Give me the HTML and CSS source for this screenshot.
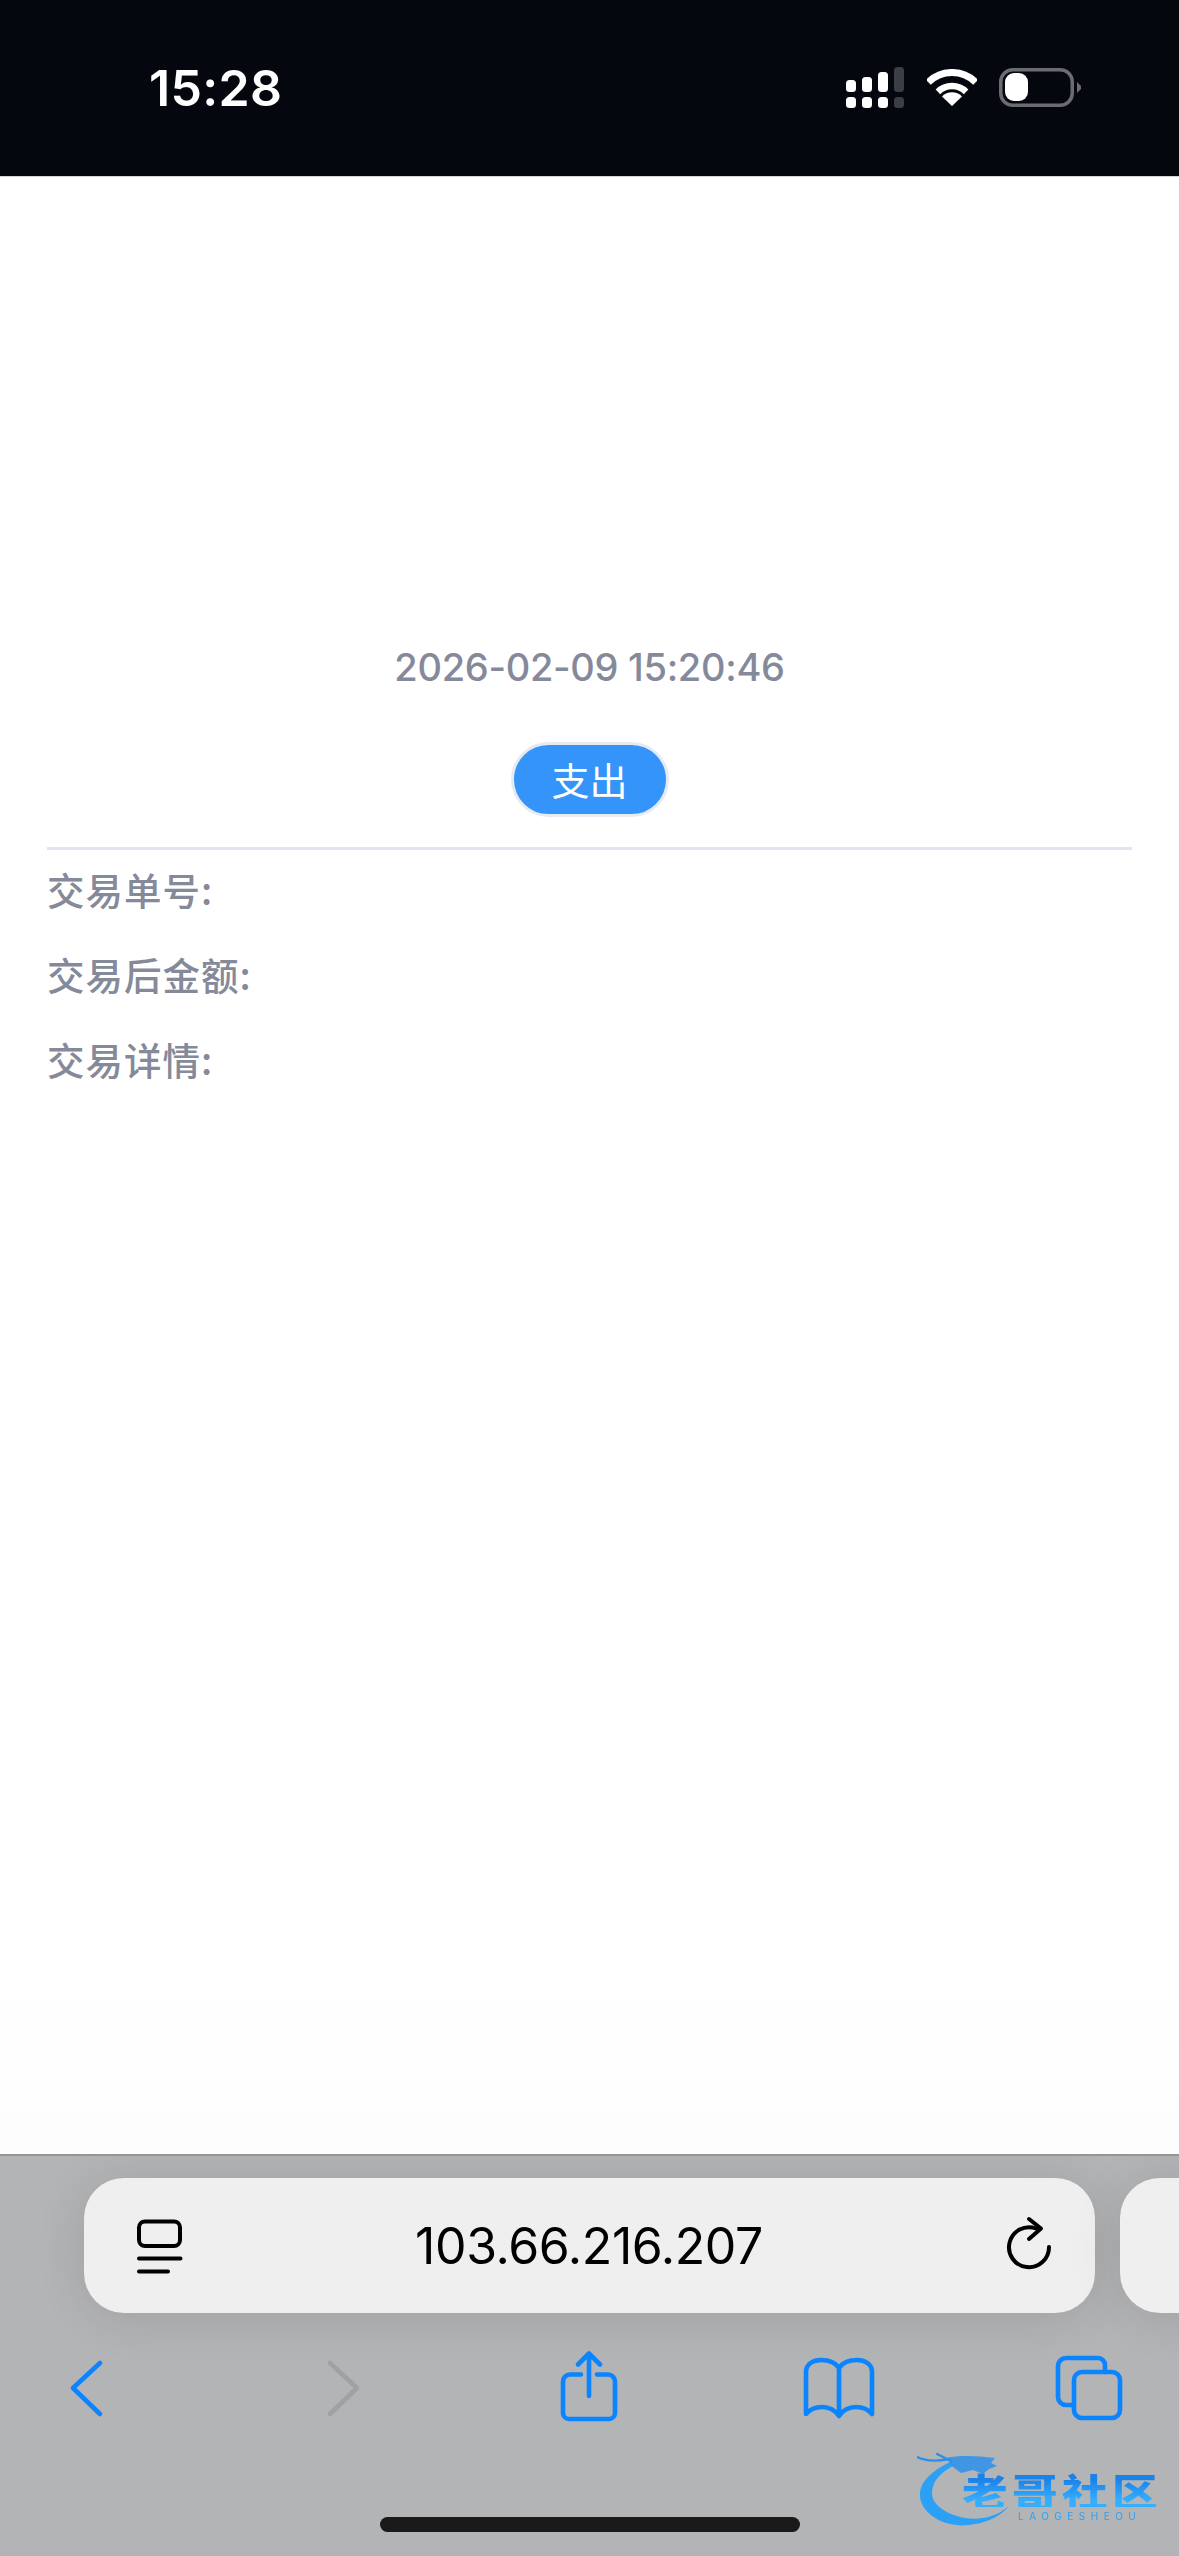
FILE: index.html
```html
<!DOCTYPE html>
<html lang="zh-CN">
<head>
<meta charset="utf-8">
<title>交易详情</title>
<link rel="stylesheet" href="styles.css">
</head>
<body>
<div class="screen">
  <header class="status">
    <span class="time">15:28</span>
    <div class="status-icons">
      <svg class="signal" width="58" height="41" viewBox="0 0 58 41">
        <g fill="#fff">
          <rect x="0" y="13" width="10" height="12" rx="3.5"/><rect x="16" y="10" width="10" height="15" rx="3.5"/><rect x="32" y="5" width="10" height="20" rx="3.5"/>
          <rect x="0" y="30" width="10" height="11" rx="3.5"/><rect x="16" y="30" width="10" height="11" rx="3.5"/><rect x="32" y="30" width="10" height="11" rx="3.5"/>
        </g>
        <g fill="#3b3e43">
          <rect x="48" y="0" width="10" height="25" rx="3.5"/><rect x="48" y="30" width="10" height="11" rx="3.5"/>
        </g>
      </svg>
      <svg class="wifi" width="50" height="37" viewBox="0 0 50 37">
        <path d="M1.3 13.3A33.5 33.5 0 0 1 48.7 13.3" fill="none" stroke="#fff" stroke-width="7"/>
        <path d="M10.9 22.9A20 20 0 0 1 39.1 22.9" fill="none" stroke="#fff" stroke-width="6.5"/>
        <path d="M25 37L15 27.5A14 14 0 0 1 35 27.5Z" fill="#fff"/>
      </svg>
      <svg class="battery" width="82" height="39" viewBox="0 0 82 39">
        <rect x="1.75" y="1.75" width="71.5" height="35.5" rx="12" fill="none" stroke="#6a6c70" stroke-width="3.5"/>
        <rect x="6" y="5" width="23" height="28" rx="9" fill="#fff"/>
        <path d="M78 14L82 18Q82.5 19.5 82 21L78 25Z" fill="#6a6c70"/>
      </svg>
    </div>
  </header>

  <main class="content">
    <p class="date">2026-02-09 15:20:46</p>
    <div class="tag-wrap"><span class="tag">支出</span></div>
    <div class="divider"></div>
    <p class="row">交易单号:</p>
    <p class="row">交易后金额:</p>
    <p class="row">交易详情:</p>
  </main>

  <footer class="toolbar">
    <div class="tabs-strip">
      <div class="url-bar">
        <svg class="url-icon" width="46" height="56" viewBox="0 0 46 56">
          <rect x="2" y="3.5" width="41" height="24.5" rx="6" fill="none" stroke="#000" stroke-width="4"/>
          <path d="M2 40.5H43.5M2 53.5H31" fill="none" stroke="#000" stroke-width="4" stroke-linecap="round"/>
        </svg>
        <span class="url">103.66.216.207</span>
        <svg class="url-icon reload" width="48" height="56" viewBox="0 0 48 56">
          <path d="M44 29A20 20 0 1 1 31 10.5" fill="none" stroke="#000" stroke-width="4" stroke-linecap="round"/>
          <path d="M24 1L36 10.5L24 21" fill="none" stroke="#000" stroke-width="4" stroke-linecap="round" stroke-linejoin="round"/>
        </svg>
      </div>
      <div class="next-card"></div>
    </div>

    <nav class="nav">
      <svg width="80" height="80" viewBox="0 0 80 80">
        <path d="M54 15L27 40L54 66" class="ico-blue"/>
      </svg>
      <svg width="80" height="80" viewBox="0 0 80 80">
        <path d="M27 15L54 40L27 66" class="ico-gray"/>
      </svg>
      <svg width="80" height="80" viewBox="0 0 80 80">
        <path d="M32 26.5H21a7 7 0 0 0-7 7V65a6 6 0 0 0 6 6H60a6 6 0 0 0 6-6V33.5a7 7 0 0 0-7-7H48" class="ico-blue"/>
        <path d="M40 48V6M29 16.5L40 5.5L51 16.5" class="ico-blue"/>
      </svg>
      <svg width="80" height="80" viewBox="0 0 80 80">
        <path d="M40 20C36 14 28 12 22 12C14 12 7 16 7 24V66C12 60 18 59 23 59C30 59 36 62 40 68C44 62 50 59 57 59C62 59 68 60 73 66V24C73 16 66 12 58 12C52 12 44 14 40 20ZM40 20V66" class="ico-blue"/>
      </svg>
      <svg width="80" height="80" viewBox="0 0 80 80">
        <path d="M56 24V17a7 7 0 0 0-7-7H17a8 8 0 0 0-8 8V49a8 8 0 0 0 8 8H25" class="ico-blue"/>
        <rect x="25" y="24" width="46" height="46" rx="8" class="ico-blue"/>
      </svg>
    </nav>

    <div class="home-indicator"></div>

    <div class="watermark">
      <svg class="wm-dragon" width="100" height="80" viewBox="0 0 100 80">
        <path d="M33 10C12 20 2 32 3 44C4 62 28 76 52 73C68 71 82 66 92 54C78 66 62 68 48 66C28 62 14 52 15 40C16 28 24 20 38 13Z" fill="#2ba0f5"/>
        <path d="M0 5C10 10 22 9 32 7M20 2L34 9" fill="none" stroke="#2b8fe8" stroke-width="2.4" stroke-linecap="round"/>
        <path d="M30 6C42 3 60 4 78 6L74 11L80 14L72 17L66 22L56 18L44 21L36 15Z" fill="#2b90ea" opacity=".85"/>
      </svg>
      <span class="wm-title">老哥社区</span>
      <span class="wm-sub">LAOGESHEOU</span>
    </div>
  </footer>
</div>
</body>
</html>
```

FILE: styles.css
```css
* { box-sizing: border-box; }
html, body { margin: 0; padding: 0; }
body { width: 1179px; height: 2556px; overflow: hidden; background: #fff; font-family: "Inter", "Noto Sans CJK SC", sans-serif; }
.screen { display: flex; flex-direction: column; height: 2556px; }

.status { flex: none; height: 177px; padding: 0 98px 1px 149px; background: #04080e; border-bottom: 1px solid #d4d4d6; display: flex; align-items: center; justify-content: space-between; }
.time { color: #fff; font-size: 50px; font-weight: 600; letter-spacing: .3px; line-height: 1; }
.status-icons { display: flex; align-items: center; }
.status-icons svg { display: block; }
.wifi { margin-left: 23px; }
.battery { margin-left: 22px; }

.content { flex: 1; padding: 460px 47px 0; background: linear-gradient(#fff 90%, #fdfdfd); color: #858a9b; font-size: 38px; }
.date { margin: 0; text-align: center; line-height: 60px; font-family: "Inter", sans-serif; font-size: 38px; font-weight: 500; letter-spacing: -.3px; }
.tag-wrap { display: flex; justify-content: center; margin-top: 45px; }
.tag { width: 158px; height: 75px; border-radius: 38px; background: #3494fa; border: 3px solid #e6eaf1; color: #fff; font-size: 38px; line-height: 68px; text-align: center; font-family: "Noto Sans CJK SC", sans-serif; }
.divider { margin-top: 30px; height: 3px; background: #e2e4f0; }
.row { margin: 0; line-height: 77px; height: 85px; font-family: "Noto Sans CJK SC", sans-serif; font-size: 37.5px; font-weight: 500; letter-spacing: 1px; }

.toolbar { position: relative; flex: none; height: 402px; background: #b3b4b6; border-top: 2px solid #949597; overflow: hidden; }
.tabs-strip { display: flex; gap: 25px; padding: 22px 0 0 84px; }
.url-bar { flex: none; width: 1011px; height: 135px; padding: 0 42px 0 53px; background: #efefef; border-radius: 40px; display: grid; grid-template-columns: 1fr auto 1fr; align-items: center; box-shadow: 0 4px 50px rgba(0,0,0,.11); }
.next-card { flex: none; width: 200px; height: 135px; background: #efefef; border-radius: 40px; box-shadow: 0 4px 50px rgba(0,0,0,.11); }
.url-icon { display: block; overflow: visible; }
.reload { justify-self: end; }
.url { color: #000; font-family: "Inter", sans-serif; font-size: 50px; letter-spacing: -.4px; line-height: 1; margin: 0 6px 0 -6px; }

.nav { display: grid; grid-template-columns: 257px 246px 250px 250px 80px; padding: 35px 0 0 46px; height: 115px; }
.nav svg { display: block; }
.ico-blue, .ico-gray { fill: none; stroke-width: 4.6; stroke-linecap: round; stroke-linejoin: round; }
.ico-blue { stroke: #0a84ff; }
.ico-gray { stroke: #a0a1a3; }

.home-indicator { width: 420px; height: 15px; margin: 89px 0 0 380px; border-radius: 8px; background: #1a1a1a; }

.watermark { position: absolute; left: 917px; top: 296px; width: 250px; height: 80px; filter: blur(.7px); }
.wm-dragon { position: absolute; left: 0; top: 0; }
.wm-title { position: absolute; left: 45px; top: 21px; font-family: "Noto Sans CJK SC", sans-serif; font-weight: 900; font-size: 38px; line-height: 34px; letter-spacing: 3.7px; white-space: nowrap; transform: scaleX(1.2); transform-origin: left center; background: linear-gradient(#1b82ea 20%, #36aeff 80%); -webkit-background-clip: text; background-clip: text; color: transparent; }
.wm-sub { position: absolute; left: 101px; top: 59px; font-family: "Inter", sans-serif; font-size: 10px; line-height: 11px; letter-spacing: 5.5px; color: #2ba0f5; white-space: nowrap; }
```
